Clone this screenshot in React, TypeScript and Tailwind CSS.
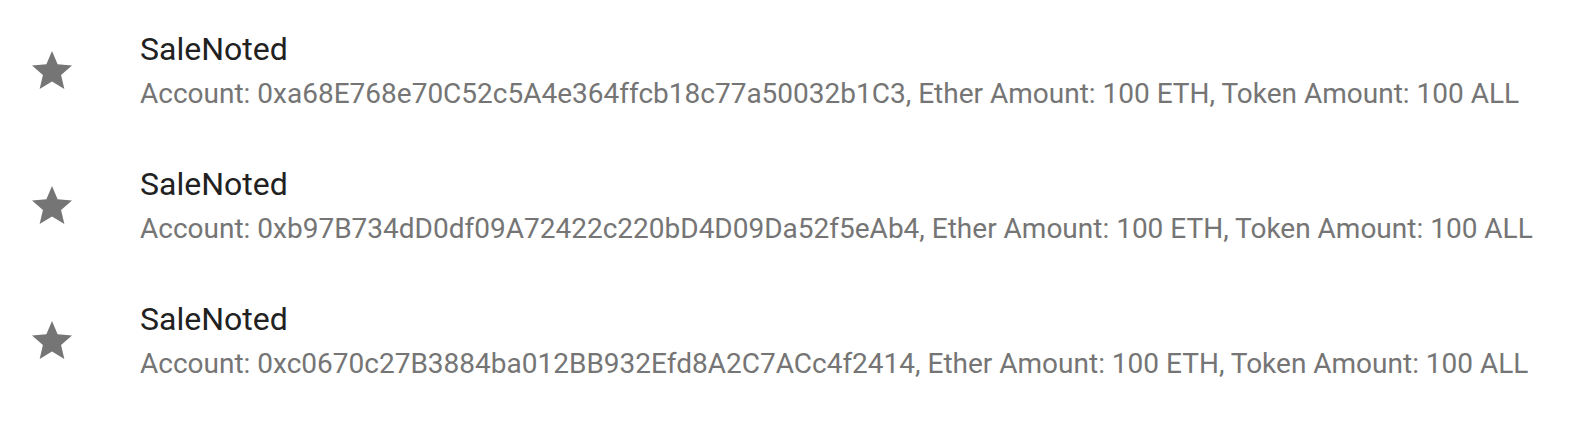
const events = [
  { account: "0xa68E768e70C52c5A4e364ffcb18c77a50032b1C3" },
  { account: "0xb97B734dD0df09A72422c220bD4D09Da52f5eAb4" },
  { account: "0xc0670c27B3884ba012BB932Efd8A2C7ACc4f2414" },
];

function StarIcon() {
  return (
    <svg viewBox="0 0 24 24" className="w-12 h-12 fill-[#757575]">
      <path d="M12 17.27L18.18 21l-1.64-7.03L22 9.24l-7.19-.61L12 2 9.19 8.63 2 9.24l5.46 4.73L5.82 21z" />
    </svg>
  );
}

export default function App() {
  return (
    <div className="min-h-screen bg-white font-['Roboto',sans-serif]">
      <ul className="pt-[2px]">
        {events.map((ev) => (
          <li key={ev.account} className="flex items-start pl-[28px] py-[23px]">
            <div className="mt-[22px] mr-8 shrink-0">
              <StarIcon />
            </div>
            <div className="pl-8 whitespace-nowrap">
              <div className="text-[32px] leading-[48px] text-[#212121]">SaleNoted</div>
              <div className="text-[28px] leading-[41px] text-[#757575]">
                Account: {ev.account}, Ether Amount: 100 ETH, Token Amount: 100 ALL
              </div>
            </div>
          </li>
        ))}
      </ul>
    </div>
  );
}
